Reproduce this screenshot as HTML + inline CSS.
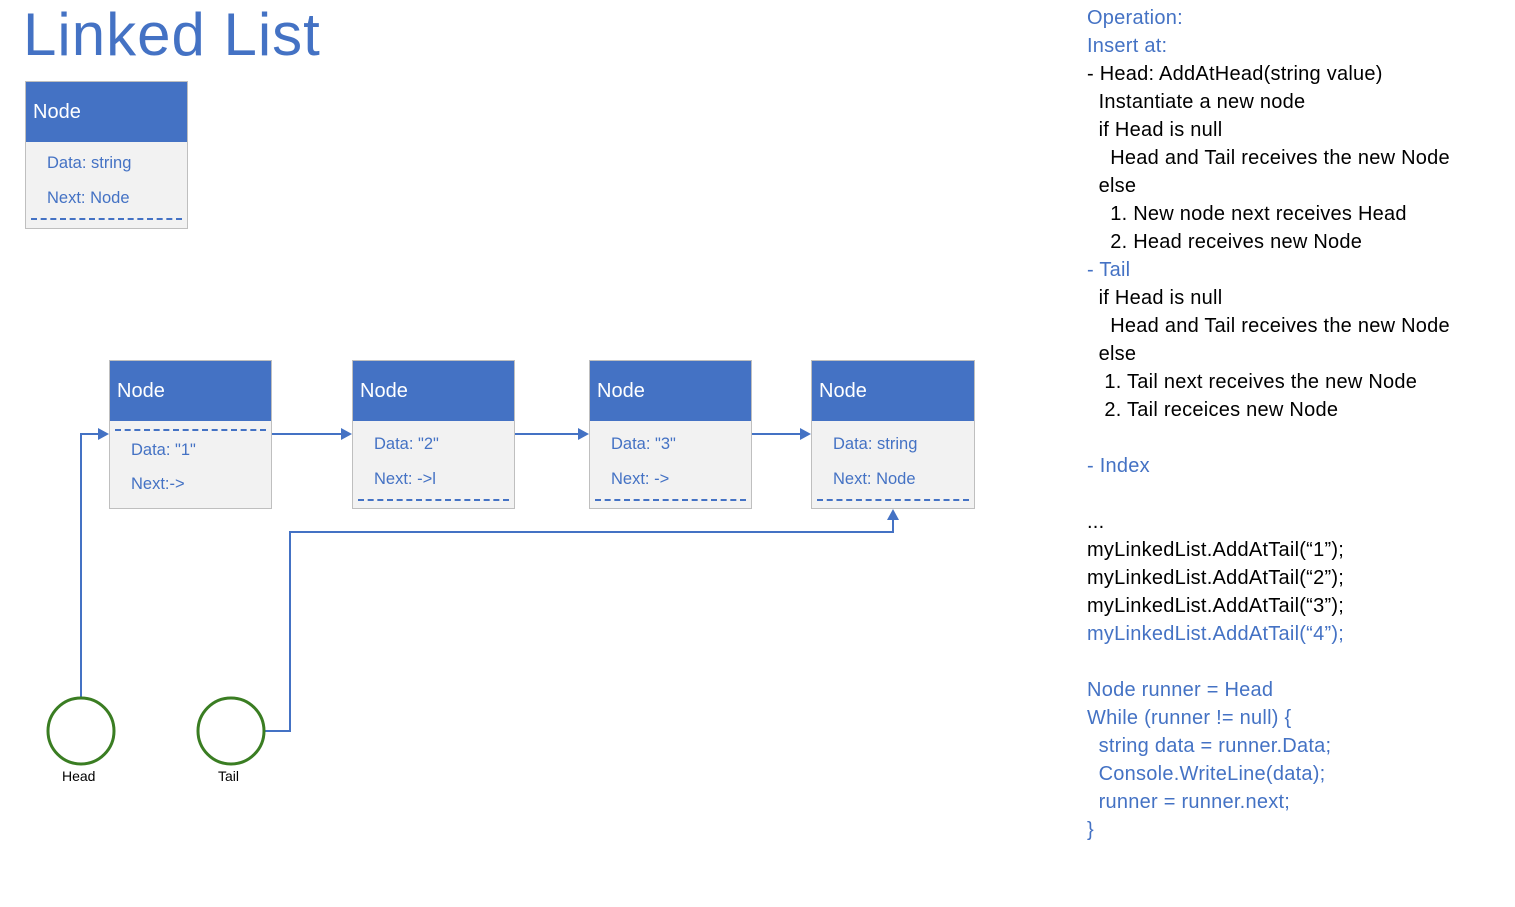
<!DOCTYPE html>
<html><head><meta charset="utf-8"><style>
body{margin:0;width:1515px;height:907px;background:#fff;position:relative;overflow:hidden;font-family:"Liberation Sans",sans-serif}
.a{position:absolute;white-space:pre}
.node{position:absolute;width:160px;height:146px;background:#f2f2f2;border:1px solid #bfbfbf;box-sizing:border-box}
.node .h{height:60px;background:#4472c4;color:#fff;font-size:20px;line-height:60px;padding-left:7px}
.node .t{position:absolute;left:21px;color:#4472c4;font-size:16.5px}
.node .d{position:absolute;left:5px;right:5px;border-top:2px dashed #4472c4;height:0}
.r{position:absolute;left:1087px;font-size:20px;letter-spacing:0.25px;white-space:pre;line-height:28px}
.b{color:#4472c4}
</style></head><body>
<div class="a" style="left:23px;top:0;font-size:60px;color:#4472c4;letter-spacing:1px">Linked List</div>

<div class="node" style="left:25px;top:81px;width:163px;height:148px"><div class="h">Node</div>
<div class="t" style="top:72px">Data: string</div><div class="t" style="top:107px">Next: Node</div><div class="d" style="top:136px"></div></div>

<div class="node" style="left:109px;top:360px;width:163px;height:149px"><div class="h">Node</div><div class="d" style="top:68px"></div>
<div class="t" style="top:80px">Data: "1"</div><div class="t" style="top:114px">Next:-&gt;</div></div>
<div class="node" style="left:352px;top:360px;width:163px;height:149px"><div class="h">Node</div>
<div class="t" style="top:74px">Data: "2"</div><div class="t" style="top:109px">Next: -&gt;l</div><div class="d" style="top:138px"></div></div>
<div class="node" style="left:589px;top:360px;width:163px;height:149px"><div class="h">Node</div>
<div class="t" style="top:74px">Data: "3"</div><div class="t" style="top:109px">Next: -&gt;</div><div class="d" style="top:138px"></div></div>
<div class="node" style="left:811px;top:360px;width:164px;height:149px"><div class="h">Node</div>
<div class="t" style="top:74px">Data: string</div><div class="t" style="top:109px">Next: Node</div><div class="d" style="top:138px"></div></div>

<svg width="1515" height="907" style="position:absolute;left:0;top:0" fill="none" stroke="#4472c4" stroke-width="2">
<path d="M81 698V434H98"/><path d="M98 428l11 6-11 6z" fill="#4472c4" stroke="none"/>
<path d="M272 434H341"/><path d="M341 428l11 6-11 6z" fill="#4472c4" stroke="none"/>
<path d="M515 434H578"/><path d="M578 428l11 6-11 6z" fill="#4472c4" stroke="none"/>
<path d="M752 434H800"/><path d="M800 428l11 6-11 6z" fill="#4472c4" stroke="none"/>
<path d="M265 731H290V532H893V520"/><path d="M887 520l6-11 6 11z" fill="#4472c4" stroke="none"/>
<circle cx="81" cy="731" r="33" stroke="#3a7d22" stroke-width="3" fill="#fff"/>
<circle cx="231" cy="731" r="33" stroke="#3a7d22" stroke-width="3" fill="#fff"/>
</svg>
<div class="a" style="left:62px;top:768px;font-size:14px">Head</div>
<div class="a" style="left:218px;top:768px;font-size:14px">Tail</div>

<div class="r" style="top:4px"><span class="b">Operation:
Insert at:</span>
- Head: AddAtHead(string value)
  Instantiate a new node
  if Head is null
    Head and Tail receives the new Node
  else
    1. New node next receives Head
    2. Head receives new Node
<span class="b">- Tail</span>
  if Head is null
    Head and Tail receives the new Node
  else
   1. Tail next receives the new Node
   2. Tail receices new Node

<span class="b">- Index</span>

...
myLinkedList.AddAtTail(“1”);
myLinkedList.AddAtTail(“2”);
myLinkedList.AddAtTail(“3”);
<span class="b">myLinkedList.AddAtTail(“4”);

Node runner = Head
While (runner != null) {
  string data = runner.Data;
  Console.WriteLine(data);
  runner = runner.next;
}</span></div>
</body></html>
